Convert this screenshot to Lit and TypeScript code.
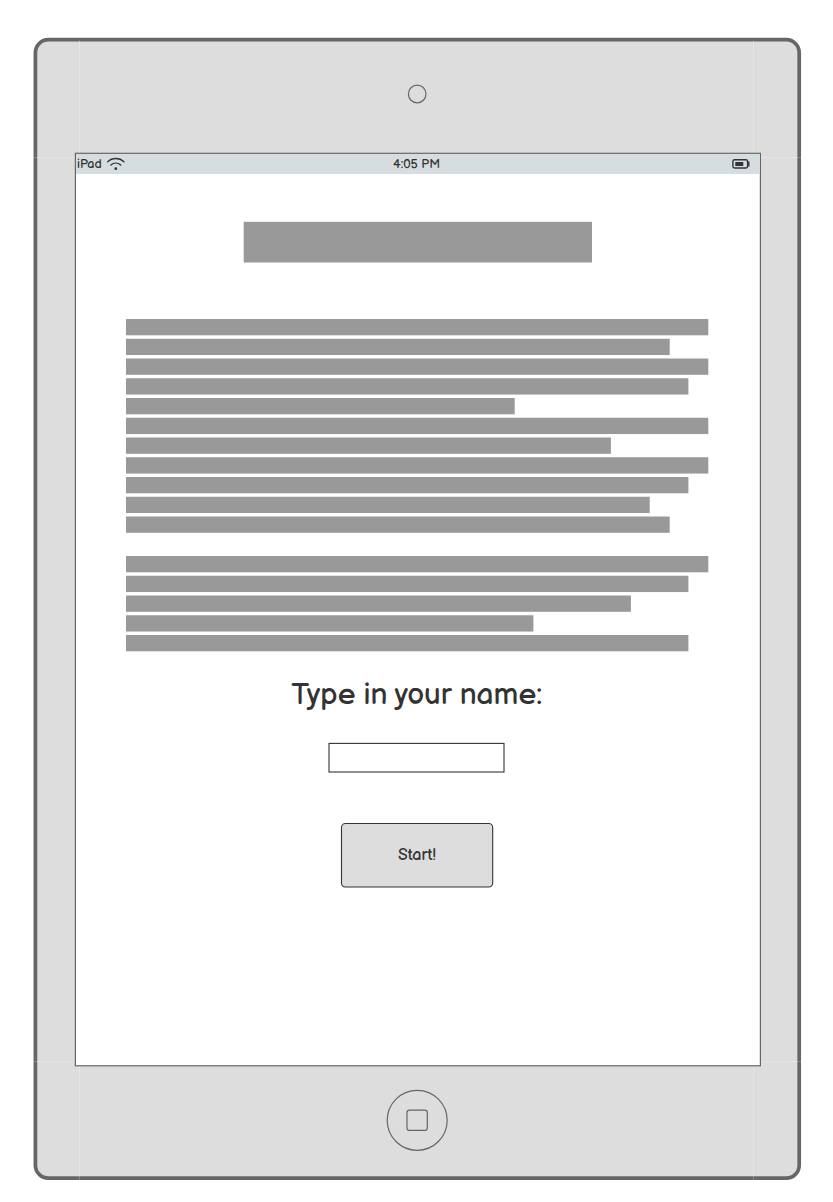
import { LitElement, html, svg, css } from "lit";
import { customElement, property } from "lit/decorators.js";

const LINE_PITCH = 19.75;
const LINE_HEIGHT = 16.3;

@customElement("text-placeholder")
class TextPlaceholder extends LitElement {
  @property({ attribute: false }) lines: number[] = [];

  static styles = css`
    :host { display: block; }
    .lines { display: block; width: 100%; height: 334px; fill: #999; }
  `;

  render() {
    return html`<svg class="lines" aria-hidden="true">
      ${this.lines.map((w, i) =>
        w ? svg`<rect x="0" y=${i * LINE_PITCH} width=${w} height=${LINE_HEIGHT}></rect>` : null
      )}
    </svg>`;
  }
}

@customElement("tablet-frame")
class TabletFrame extends LitElement {
  static styles = css`
    :host { display: block; }
    .frame { display: block; width: 833px; height: 1202px; }
  `;

  render() {
    return html`<svg class="frame" viewBox="0 0 833 1202" fill="none" aria-hidden="true">
      <rect x="35.4" y="39.7" width="763.8" height="1138.5" rx="13" fill="#ddd" stroke="#666" stroke-width="3.7" />
      <g stroke="#fff" stroke-opacity=".22">
        <path d="M79.5 40V153M753.5 40V153M79.5 1066V1180M753.5 1066V1180" />
        <path d="M34 157.5H75M761 157.5H801M34 1061.5H75M761 1061.5H801" />
      </g>
      <circle cx="417.2" cy="94" r="8.8" stroke="#666" stroke-width="1.2" />
      <rect x="75.4" y="153.3" width="685" height="912.5" fill="#fff" stroke="#666" stroke-width="1.2" />
      <circle cx="417.2" cy="1120.3" r="30" stroke="#666" stroke-width="1.2" />
      <rect x="407" y="1110.2" width="20.3" height="20.2" rx="2.5" stroke="#666" stroke-width="1.2" />
    </svg>`;
  }
}

@customElement("app-root")
class AppRoot extends LitElement {
  static styles = css`
    :host {
      display: block;
      position: relative;
      width: 833px;
      height: 1202px;
      overflow: hidden;
      background: #fff;
      color: #333;
      font-family: "Balsamiq Sans", Inter, sans-serif;
      font-feature-settings: "cv11";
      font-weight: 400;
    }
    .backdrop { position: absolute; inset: 0; }
    .stage { position: relative; padding: 154px 73px 0 76px; }
    .screen { display: flex; flex-direction: column; align-items: center; width: 684px; height: 911px; }
    .status {
      box-sizing: border-box;
      width: 100%;
      height: 20px;
      display: grid;
      grid-template-columns: 1fr auto 1fr;
      align-items: center;
      padding: 0 9px 0 1px;
      background: #d6dde0;
      font-size: 12.6px;
      line-height: 20px;
    }
    .carrier { display: flex; align-items: center; }
    .carrier-name { width: 29px; padding-top: 1px; line-height: 19px; }
    .time { padding-top: 1px; line-height: 19px; margin-right: -5px; }
    .battery { justify-self: end; }
    .icon { display: block; }
    .title { width: 350px; height: 42px; margin: 47px 0 56px; }
    .copy { width: 583px; margin-right: 1px; }
    .prompt {
      margin: 24px 2.6px 0 0;
      font-size: 30px;
      line-height: 36px;
      font-weight: 400;
      white-space: nowrap;
    }
    .field { width: 178px; height: 32px; margin: 29px 4px 0 0; }
    .start {
      position: relative;
      display: grid;
      place-items: center;
      width: 154px;
      height: 66px;
      margin-top: 48px;
      margin-right: 2px;
      padding: 0;
      border: 0;
      background: none;
      color: inherit;
      font: inherit;
      font-feature-settings: inherit;
      font-size: 16.2px;
    }
    .start-shape { position: absolute; inset: 0; }
    .start-label { position: relative; }
  `;

  private copyLines = [
    582.3, 543.7, 582.3, 562.4, 388.7, 582.3, 484.9, 582.3, 562.4, 523.7, 543.7,
    0,
    582.3, 562.4, 504.9, 407.4, 562.4,
  ];

  render() {
    return html`
      <tablet-frame class="backdrop"></tablet-frame>
      <div class="stage">
        <main class="screen">
          <header class="status">
            <div class="carrier">
              <span class="carrier-name">iPad</span>
              <svg class="icon" width="20" height="14" viewBox="0 0 20 14" fill="none" stroke="#333" stroke-width="1.3" stroke-linecap="round">
                <path d="M1.7 4.8C6.2.4 13.3.4 18 4.8" />
                <path d="M4.9 8C7.8 5.5 11.8 5.5 14.7 8" />
                <circle cx="9.8" cy="11.7" r="1.4" fill="#333" stroke="none" />
              </svg>
            </div>
            <span class="time">4:05 PM</span>
            <svg class="icon battery" width="20" height="12" viewBox="0 0 20 12" fill="none">
              <rect x="1.9" y="1.8" width="14.7" height="8.2" rx="1.7" stroke="#333" stroke-width="1.4" />
              <path d="M17.8 4v4" stroke="#333" stroke-width="1.4" stroke-linecap="round" />
              <rect x="4.3" y="4" width="8" height="4" fill="#333" />
            </svg>
          </header>
          <svg class="title" viewBox="0 0 350 42" aria-hidden="true">
            <rect x="0.7" y="0.8" width="348.3" height="40.7" fill="#999" />
          </svg>
          <text-placeholder class="copy" .lines=${this.copyLines}></text-placeholder>
          <h1 class="prompt">Type in your name:</h1>
          <svg class="field" viewBox="0 0 178 32" role="img" aria-label="Name">
            <rect x="2" y="1.4" width="175" height="28.6" fill="#fff" stroke="#333" stroke-width="1.1" />
          </svg>
          <button class="start">
            <svg class="start-shape" width="154" height="66" aria-hidden="true">
              <rect x="1.5" y="1.5" width="151.2" height="63.5" rx="4" fill="#ddd" stroke="#333" stroke-width="1.1" />
            </svg>
            <span class="start-label">Start!</span>
          </button>
        </main>
      </div>
    `;
  }
}
